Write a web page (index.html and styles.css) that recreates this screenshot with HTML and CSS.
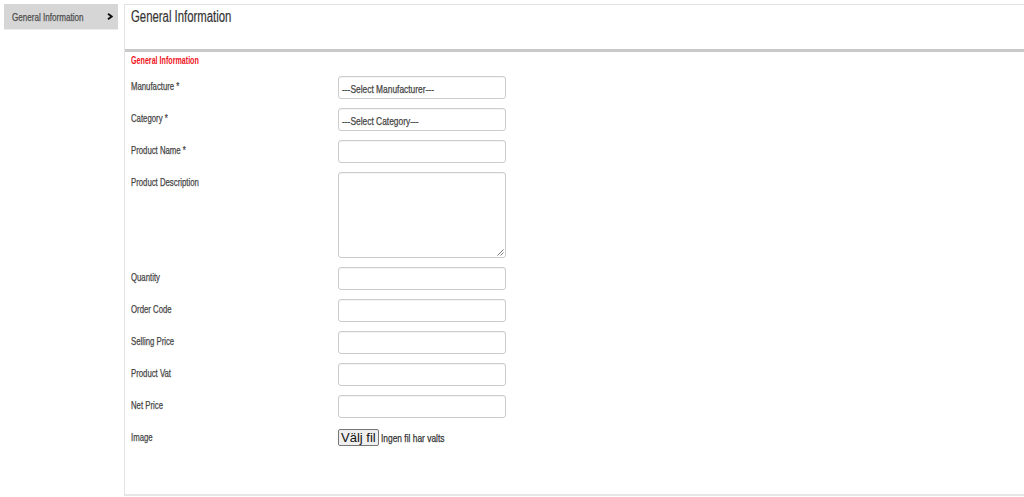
FILE: index.html
```html
<!DOCTYPE html>
<html>
<head>
<meta charset="utf-8">
<link rel="stylesheet" href="styles.css">
</head>
<body>
<div class="page">
  <aside class="side">
    <div class="side-item">
      <span class="cond c77">General Information</span>
      <svg class="chev" width="6" height="7" viewBox="0 0 6 7"><path d="M1 0.8 L4.6 3.5 L1 6.2" fill="none" stroke="#111" stroke-width="1.9"/></svg>
    </div>
  </aside>
  <main class="panel">
    <div class="panel-head"><span class="cond c71">General Information</span></div>
    <div class="panel-body">
      <div class="section"><span class="cond c68">General Information</span></div>
      <div class="row"><label><span class="cond">Manufacture *</span></label><div class="ctl sel"><span class="cond c80">---Select Manufacturer---</span></div></div>
      <div class="row"><label><span class="cond">Category *</span></label><div class="ctl sel"><span class="cond c80">---Select Category---</span></div></div>
      <div class="row"><label><span class="cond">Product Name *</span></label><div class="ctl"></div></div>
      <div class="row tall"><label><span class="cond">Product Description</span></label><div class="ctl area"><svg class="grip" width="7" height="7" viewBox="0 0 7 7"><path d="M6.5 0.5 L0.5 6.5 M6.5 3.5 L3.5 6.5" stroke="#666" stroke-width="0.9"/></svg></div></div>
      <div class="row"><label><span class="cond">Quantity</span></label><div class="ctl"></div></div>
      <div class="row"><label><span class="cond">Order Code</span></label><div class="ctl"></div></div>
      <div class="row"><label><span class="cond">Selling Price</span></label><div class="ctl"></div></div>
      <div class="row"><label><span class="cond">Product Vat</span></label><div class="ctl"></div></div>
      <div class="row"><label><span class="cond">Net Price</span></label><div class="ctl"></div></div>
      <div class="row file"><label><span class="cond">Image</span></label><div class="filewrap"><span class="btn">Välj fil</span><span class="nofile"><span class="cond c80">Ingen fil har valts</span></span></div></div>
    </div>
  </main>
</div>
</body>
</html>
```
FILE: styles.css
```css
html, body { margin: 0; padding: 0; background: #fff; }
body {
  font-family: "Liberation Sans", Arial, sans-serif;
  color: #454545;
  overflow: hidden;
}
.cond {
  display: inline-block;
  white-space: nowrap;
  transform: scaleX(0.74);
  transform-origin: 0 50%;
  -webkit-text-stroke: 0.25px currentColor;
}
.cond.c68 { transform: scaleX(0.68); }
.cond.c71 { transform: scaleX(0.71); -webkit-text-stroke: 0.2px currentColor; }
.cond.c77 { transform: scaleX(0.77); }
.cond.c80 { transform: scaleX(0.8); }
.page {
  display: flex;
  align-items: flex-start;
  padding: 4px 0 0 4px;
  gap: 6px;
  height: 497px;
  box-sizing: border-box;
}
.side { width: 114px; flex: none; }
.side-item {
  height: 26px;
  box-sizing: border-box;
  background: #d6d6d6;
  border-bottom: 1px solid #ececec;
  display: flex;
  align-items: center;
  justify-content: space-between;
  padding: 0 5px 0 8px;
  font-size: 10.5px;
  line-height: 12px;
  color: #4d4d4d;
}
.side-item .cond { padding-top: 1px; width: 80px; }
.chev { display: block; }
.panel {
  flex: 1;
  height: 492px;
  box-sizing: border-box;
  border: 1px solid #e3e3e3;
  border-bottom: 2px solid #e6e6e6;
  border-right: none;
}
.panel-head {
  height: 47px;
  box-sizing: border-box;
  border-bottom: 3px solid #c9c9c9;
  padding: 3px 0 0 6px;
  font-size: 16px;
  line-height: 18px;
  color: #333;
}
.panel-body { padding: 2px 0 0 6px; }
.section {
  color: #f0141c;
  font-weight: bold;
  font-size: 10.5px;
  line-height: 12px;
  margin-bottom: 10px;
}
.section .cond { -webkit-text-stroke: 0; }
.row {
  display: flex;
  align-items: flex-start;
  height: 32px;
  font-size: 10.5px;
  line-height: 12px;
}
.row label { width: 207px; flex: none; padding-top: 4px; }
.ctl {
  width: 168px;
  height: 23px;
  box-sizing: border-box;
  border: 1px solid #cccccc;
  border-radius: 3px;
  box-shadow: inset 0 1px 1px rgba(0,0,0,0.05);
  color: #444;
  padding: 6px 0 0 3px;
  position: relative;
}
.row.tall { height: 95px; }
.ctl.area { height: 86px; }
.grip { position: absolute; right: 1px; bottom: 1px; }
.filewrap { display: flex; align-items: center; gap: 2px; margin-top: 2px; }
.btn {
  font-size: 13px;
  color: #111;
  background: #efefef;
  border: 1px solid #767676;
  border-radius: 2px;
  padding: 0 2px;
  height: 15px;
  line-height: 15px;
}
.nofile { color: #333; width: 70px; }
```
